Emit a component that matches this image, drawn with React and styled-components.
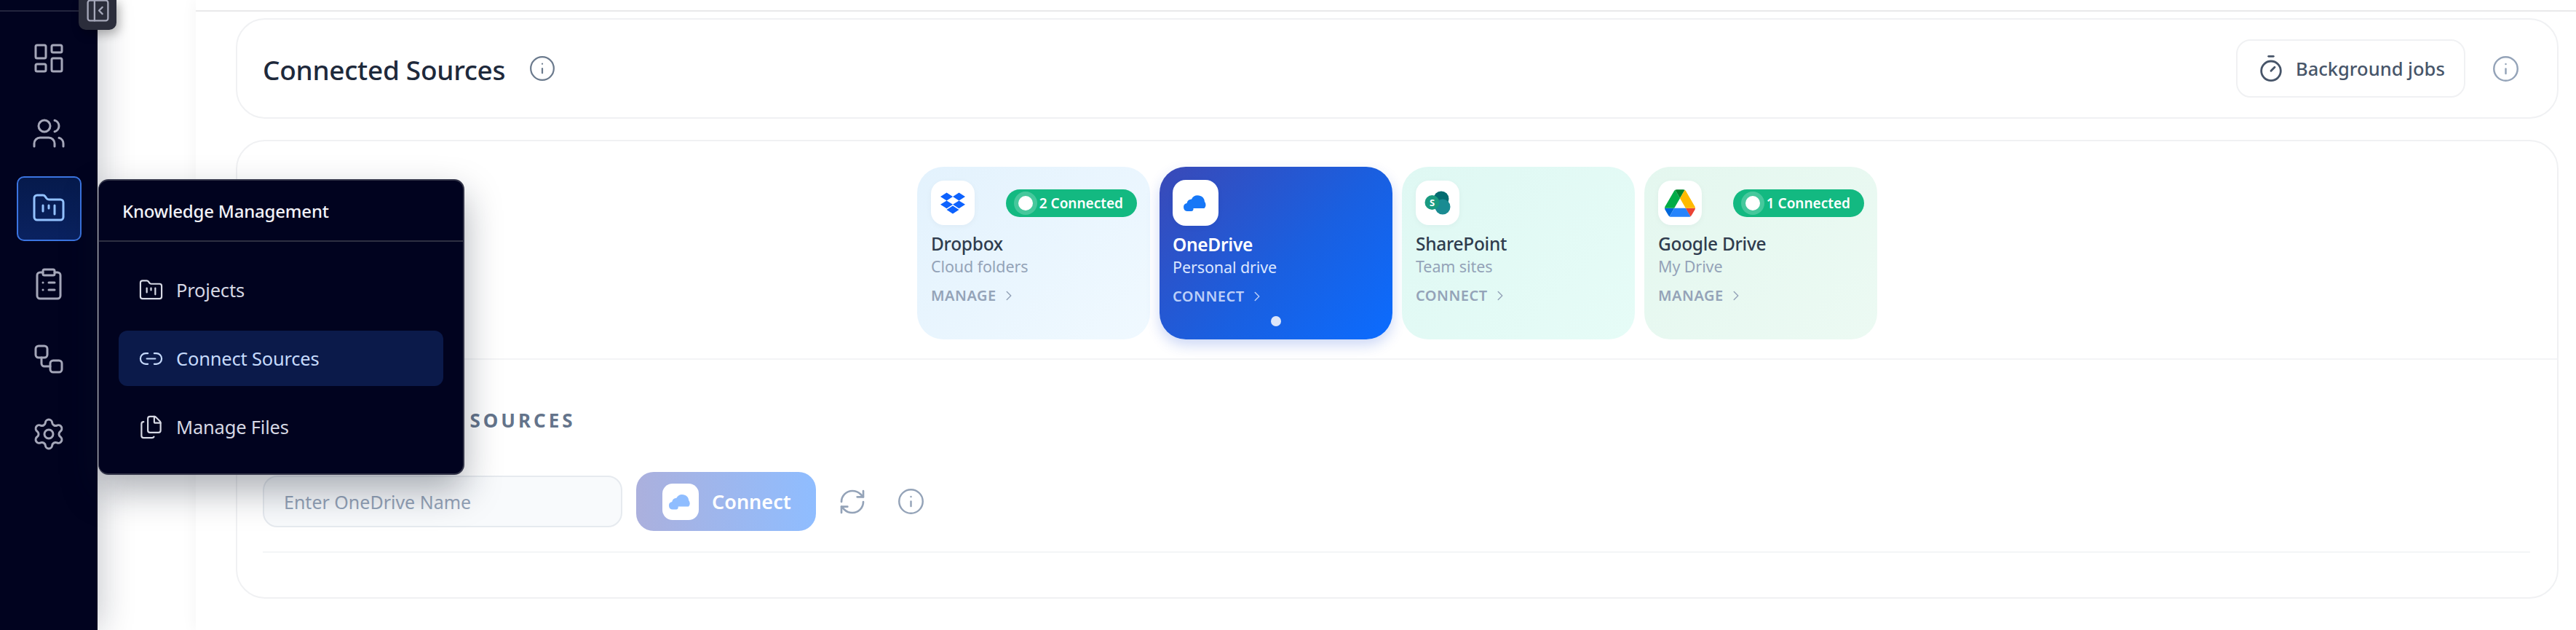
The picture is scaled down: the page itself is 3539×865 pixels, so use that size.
import React from "react";
import styled, { createGlobalStyle } from "styled-components";
import {
  LayoutDashboard, Users, FolderKanban, ClipboardList, Workflow, Settings,
  PanelLeftClose, Link2, Files, Info, Timer, RefreshCw, ChevronRight,
} from "lucide-react";
import { FaDropbox } from "react-icons/fa";

const Global = createGlobalStyle`
  html, body { margin: 0; padding: 0; background: #fff; overflow: hidden; }
  * { box-sizing: border-box; }
  body { font-family: "Noto Sans", "Open Sans", sans-serif; }
`;

const Page = styled.div`
  position: relative; display: flex; width: 3539px; height: 865px; overflow: hidden; background: #fff;
`;
const Sidebar = styled.aside`
  position: relative; z-index: 3; flex: 0 0 134px; background: #01031f;
  box-shadow: 0 0 50px rgba(15, 23, 42, 0.28);
`;
const SideLine = styled.div`
  height: 2px; width: 108px; margin-top: 14px; background: #23253d;
`;
const SideNav = styled.nav`
  display: flex; flex-direction: column; align-items: center; gap: 14.4px; padding-top: 19px;
`;
const SideButton = styled.div`
  width: 89px; height: 89px; display: flex; align-items: center; justify-content: center;
  border-radius: 10px; color: ${p => (p.$active ? "#93c2ff" : "#a5a7b9")};
  border: 2px solid ${p => (p.$active ? "#3b74e0" : "transparent")};
  background: ${p => (p.$active ? "linear-gradient(180deg,#061a4c,#0a2260)" : "transparent")};
`;
const Toggle = styled.div`
  position: absolute; left: 108px; top: -2px; width: 52px; height: 43px; z-index: 4;
  display: flex; align-items: flex-end; justify-content: center; padding-bottom: 8px;
  background: #2b2d3b; border-radius: 0 0 10px 10px; color: #a5a7b9;
  box-shadow: 4px 6px 14px rgba(0,0,0,.28);
`;
const Gutter = styled.div`flex: 0 0 135px;`;
const Main = styled.main`
  flex: 1; min-width: 0; padding: 0 24px 0 55px; box-shadow: -4px 0 18px rgba(15,23,42,.035);
  display: flex; flex-direction: column; gap: 29px;
`;
const TopWrap = styled.div`
  display: flex; flex-direction: column;
`;
const TopLine = styled.div`
  height: 2px; margin: 14px -24px 9px -55px; background: #e9e9ea;
`;
const HeaderCard = styled.section`
  height: 138px; display: flex; align-items: center; padding: 0 51px 0 35px;
  background: #fff; border: 2px solid #f0f1f3; border-radius: 40px;
`;
const Title = styled.h1`
  margin: 3px 0 0; font-size: 37px; font-weight: 500; color: #1e293b; letter-spacing: -0.3px; line-height: 1;
`;
const TitleInfo = styled.span`
  display: flex; margin-left: 32px; color: #6b7a8d;
`;
const Spacer = styled.div`flex: 1;`;
const JobsButton = styled.div`
  width: 315px; height: 80px; display: flex; align-items: center; gap: 14px; padding-left: 26px;
  border: 2px solid #f0f1f3; border-radius: 20px; color: #475569;
  font-size: 25.5px; font-weight: 500;
`;
const HeaderInfo = styled.span`
  display: flex; margin-left: 36px; color: #94a3b8;
`;
const BodyCard = styled.section`
  height: 630px; background: #fff; border: 2px solid #f0f1f3; border-radius: 40px;
`;
const CardRow = styled.div`
  display: flex; justify-content: center; gap: 13px; padding: 35px 0 26px;
  border-bottom: 2px solid #f3f4f6;
`;
const Card = styled.div`
  position: relative; width: 320px; height: 237px; padding: 19px 18px 0 19px; border-radius: 36px;
  background: ${p => p.$bg};
  ${p => p.$active && "box-shadow: 0 8px 18px rgba(29, 78, 216, .22); padding: 18px 18px 0 18px;"}
`;
const CardTop = styled.div`
  display: flex; align-items: center; justify-content: space-between;
`;
const Tile = styled.div`
  width: ${p => (p.$active ? 63 : 60)}px; height: ${p => (p.$active ? 63 : 61)}px;
  display: flex; align-items: center; justify-content: center; background: #fff; border-radius: 18px;
  box-shadow: 0 2px 8px rgba(15,23,42,.04);
`;
const Badge = styled.div`
  display: flex; align-items: center; height: 38px; margin-top: 1px; padding: 0 19px 0 17px; gap: 9px; border-radius: 19px;
  background: #13b981; color: #fff; font-size: 19px; font-weight: 600; white-space: nowrap;
`;
const BadgeDot = styled.span`
  width: 20px; height: 20px; border-radius: 50%; background: #fff;
  box-shadow: 0 0 0 6px rgba(255,255,255,.22);
`;
const CardName = styled.div`
  margin-top: 8px; font-size: 24.5px; line-height: 36px; font-weight: 500; letter-spacing: -0.3px;
  color: ${p => (p.$active ? "#fff" : "#2f3c4e")};
  ${p => p.$active && "font-weight: 600;"}
`;
const CardSub = styled.div`
  font-size: 21.5px; line-height: 28px; margin-top: -1px; letter-spacing: -0.1px;
  color: ${p => (p.$active ? "#dbe6ff" : "#94a3b8")};
`;
const CardAction = styled.div`
  display: flex; align-items: center; gap: 6px; margin-top: 12px; font-size: 20px; line-height: 28px;
  font-weight: 600; letter-spacing: 0.5px; color: ${p => (p.$active ? "#bccff8" : "#94a3b8")};
`;
const ActiveDot = styled.span`
  position: absolute; left: 153px; bottom: 18px; width: 14px; height: 14px; border-radius: 50%; background: #dce6fa;
`;
const Section = styled.div`
  padding: 66px 37px 0 35px;
`;
const SectionTitle = styled.h2`
  margin: 0; font-size: 26px; line-height: 34px; font-weight: 700; letter-spacing: 4px; word-spacing: 6px;
  color: #64748b; white-space: nowrap;
`;
const FormRow = styled.div`
  display: flex; align-items: center; margin-top: 54px; padding-bottom: 28px; border-bottom: 2px solid #f3f5f7;
`;
const InputBox = styled.div`
  width: 494px; height: 71px; display: flex; align-items: center; padding-left: 27px;
  background: #f8fafc; border: 2px solid #e6eaef; border-radius: 20px;
  color: #94a3b8; font-size: 25px;
`;
const ConnectButton = styled.div`
  width: 247px; height: 81px; margin-left: 19px; display: flex; align-items: center; gap: 18px; padding-left: 36px;
  border-radius: 24px; background: linear-gradient(90deg, #abb0dd, #8fbdff);
  color: #fff; font-size: 27px; font-weight: 600;
`;
const MiniTile = styled.div`
  width: 50px; height: 50px; display: flex; align-items: center; justify-content: center; background: #fff; border-radius: 14px;
`;
const FormIcon = styled.span`
  display: flex; color: #94a3b8; margin-left: ${p => p.$ml}px;
`;
const Popup = styled.div`
  position: absolute; left: 135px; top: 246px; width: 503px; height: 406px; z-index: 5;
  background: #01031f; border: 2px solid #34364a; border-left-width: 1px; border-radius: 14px;
  box-shadow: 0 22px 50px rgba(15,23,42,.34);
`;
const PopupHead = styled.div`
  height: 84px; display: flex; align-items: center; padding-left: 32px; border-bottom: 2px solid #2e3042;
  color: #f1f2f8; font-size: 24px; font-weight: 500; letter-spacing: -0.2px;
`;
const PopupList = styled.div`
  display: flex; flex-direction: column; gap: 18px; padding: 28px 27px 0 27px;
`;
const PopupItem = styled.div`
  height: 76px; display: flex; align-items: center; gap: 17px; padding-left: 27px; border-radius: 12px;
  font-size: 25.5px; letter-spacing: -0.2px; color: ${p => (p.$active ? "#c6dafc" : "#d6d8e4")};
  background: ${p => (p.$active ? "#0b1a4a" : "transparent")};
`;

const Cloud = ({ size = 36, color = "#1677f7" }) => (
  <svg width={size} height={size} viewBox="0 0 36 36" aria-hidden="true">
    <path fill={color} d="M6.5 29a5.5 5.5 0 0 1-1-10.9A7 7 0 0 1 12 12.4a9.6 9.6 0 0 1 18 3.7A6.5 6.5 0 0 1 29.5 25H14.5v1.5A2.6 2.6 0 0 1 12 29z" />
  </svg>
);
const Drive = () => (
  <svg width="42" height="38" viewBox="0 0 87.3 78" aria-hidden="true">
    <path d="m6.6 66.85 3.85 6.65c.8 1.4 1.95 2.5 3.3 3.3l13.75-23.8h-27.5c0 1.55.4 3.1 1.2 4.5z" fill="#0066da" />
    <path d="m43.65 25-13.75-23.8c-1.35.8-2.5 1.9-3.3 3.3l-25.4 44a9.06 9.06 0 0 0 -1.2 4.5h27.5z" fill="#00ac47" />
    <path d="m73.55 76.8c1.35-.8 2.5-1.9 3.3-3.3l1.6-2.75 7.65-13.25c.8-1.4 1.2-2.95 1.2-4.5h-27.502l5.852 11.5z" fill="#ea4335" />
    <path d="m43.65 25 13.75-23.8c-1.35-.8-2.9-1.2-4.5-1.2h-18.5c-1.6 0-3.15.45-4.5 1.2z" fill="#00832d" />
    <path d="m59.8 53h-32.3l-13.75 23.8c1.35.8 2.9 1.2 4.5 1.2h50.8c1.6 0 3.15-.45 4.5-1.2z" fill="#2684fc" />
    <path d="m73.4 26.5-12.7-22c-.8-1.4-1.95-2.5-3.3-3.3l-13.75 23.8 16.15 28h27.45c0-1.55-.4-3.1-1.2-4.5z" fill="#ffba00" />
  </svg>
);
const SharePoint = () => (
  <svg width="36" height="34" viewBox="0 0 36 34" aria-hidden="true">
    <circle cx="23" cy="11" r="10.5" fill="#036c70" />
    <circle cx="25" cy="22" r="10.5" fill="#1a8b92" />
    <circle cx="10.5" cy="16" r="10" fill="#1a9a80" />
    <text x="10.5" y="21" textAnchor="middle" fontSize="13" fontWeight="700" fill="#fff" fontFamily="Noto Sans">S</text>
  </svg>
);

const cards = [
  { name: "Dropbox", sub: "Cloud folders", action: "MANAGE", badge: "2 Connected", bg: "linear-gradient(135deg,#e3f2fd,#f0f9ff)", icon: <FaDropbox size={34} color="#0d62fe" /> },
  { name: "OneDrive", sub: "Personal drive", action: "CONNECT", active: true, bg: "linear-gradient(135deg,#3a49b7,#1a5fe0 55%,#0b6cff)", icon: <Cloud size={36} /> },
  { name: "SharePoint", sub: "Team sites", action: "CONNECT", bg: "linear-gradient(135deg,#dff8f3,#e6fcf7)", icon: <SharePoint /> },
  { name: "Google Drive", sub: "My Drive", action: "MANAGE", badge: "1 Connected", bg: "linear-gradient(135deg,#e4f7ef,#ecfaf3)", icon: <Drive /> },
];

const nav = [LayoutDashboard, Users, FolderKanban, ClipboardList, Workflow, Settings];

export default function App() {
  return (
    <Page>
      <Global />
      <Sidebar>
        <SideLine />
        <Toggle><PanelLeftClose size={37} strokeWidth={1.5} /></Toggle>
        <SideNav>
          {nav.map((Icon, i) => (
            <SideButton key={i} $active={i === 2}><Icon size={48} strokeWidth={1.5} /></SideButton>
          ))}
        </SideNav>
      </Sidebar>
      <Gutter />
      <Main>
        <TopWrap>
          <TopLine />
          <HeaderCard>
            <Title>Connected Sources</Title>
            <TitleInfo><Info size={38} strokeWidth={1.4} /></TitleInfo>
            <Spacer />
            <JobsButton><Timer size={40} strokeWidth={1.7} />Background jobs</JobsButton>
            <HeaderInfo><Info size={39} strokeWidth={1.5} /></HeaderInfo>
          </HeaderCard>
        </TopWrap>
        <BodyCard>
          <CardRow>
            {cards.map(c => (
              <Card key={c.name} $bg={c.bg} $active={c.active}>
                <CardTop>
                  <Tile $active={c.active}>{c.icon}</Tile>
                  {c.badge && <Badge><BadgeDot />{c.badge}</Badge>}
                </CardTop>
                <CardName $active={c.active}>{c.name}</CardName>
                <CardSub $active={c.active}>{c.sub}</CardSub>
                <CardAction $active={c.active}>{c.action}<ChevronRight size={22} strokeWidth={1.6} /></CardAction>
                {c.active && <ActiveDot />}
              </Card>
            ))}
          </CardRow>
          <Section>
            <SectionTitle>CONNECT DRIVE SOURCES</SectionTitle>
            <FormRow>
              <InputBox>Enter OneDrive Name</InputBox>
              <ConnectButton><MiniTile><Cloud size={34} color="#8fbdff" /></MiniTile>Connect</ConnectButton>
              <FormIcon $ml={30}><RefreshCw size={40} strokeWidth={1.6} /></FormIcon>
              <FormIcon $ml={41}><Info size={39} strokeWidth={1.5} /></FormIcon>
            </FormRow>
          </Section>
        </BodyCard>
      </Main>
      <Popup>
        <PopupHead>Knowledge Management</PopupHead>
        <PopupList>
          <PopupItem><FolderKanban size={35} strokeWidth={1.5} />Projects</PopupItem>
          <PopupItem $active><Link2 size={35} strokeWidth={1.5} />Connect Sources</PopupItem>
          <PopupItem><Files size={35} strokeWidth={1.5} />Manage Files</PopupItem>
        </PopupList>
      </Popup>
    </Page>
  );
}
